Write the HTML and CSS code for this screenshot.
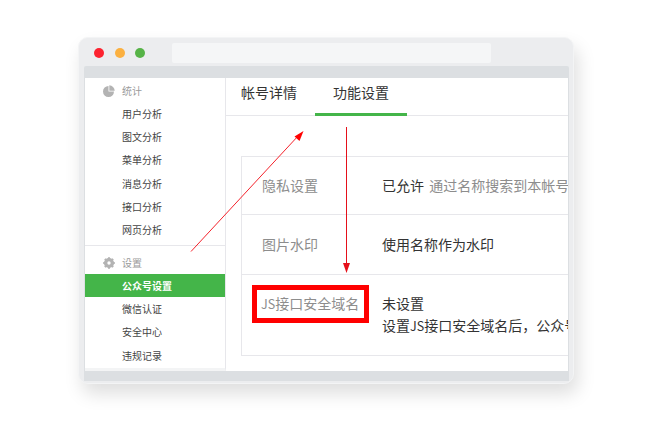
FILE: index.html
```html
<!DOCTYPE html>
<html lang="zh-CN">

<head>
    <meta charset="UTF-8">
    <title>功能设置</title>
    <link rel="stylesheet" href="styles.css">
</head>

<body>
    <div class="window">
        <div class="title_bar">
            <div class="dots">
                <span class="dot red"></span>
                <span class="dot orange"></span>
                <span class="dot green"></span>
            </div>
            <div class="address"></div>
        </div>
        <div class="screen">
            <div class="screen_top"></div>
            <div class="page">
                <div class="side">
                    <div class="menu_title">
                        <svg class="menu_icon" viewBox="0 0 12 12">
                            <path d="M5.500 1V6.500H11A5.500 5.500 0 1 1 5.500 1z" fill="#b3b3b3" />
                            <path d="M6.300 .3A5.500 5.500 0 0 1 11.700 5.700H6.300z" fill="#b3b3b3" />
                        </svg>
                        统计
                    </div>
                    <a class="menu_item">用户分析</a>
                    <a class="menu_item">图文分析</a>
                    <a class="menu_item">菜单分析</a>
                    <a class="menu_item">消息分析</a>
                    <a class="menu_item">接口分析</a>
                    <a class="menu_item">网页分析</a>
                    <div class="menu_line"></div>
                    <div class="menu_title">
                        <svg class="menu_icon" viewBox="0 0 12 12">
                            <circle cx="6" cy="6" r="3.400" fill="none" stroke="#b3b3b3" stroke-width="3.400" />
                            <path d="M6 .2V2M6 10V11.800M.2 6H2M10 6H11.800M1.900 1.900L3.200 3.200M8.800 8.800L10.100 10.100M1.900 10.100L3.200 8.800M8.800 3.200L10.100 1.900" stroke="#b3b3b3" stroke-width="2" />
                        </svg>
                        设置
                    </div>
                    <a class="menu_item active">公众号设置</a>
                    <a class="menu_item">微信认证</a>
                    <a class="menu_item">安全中心</a>
                    <a class="menu_item">违规记录</a>
                </div>
                <div class="main">
                    <div class="tabs">
                        <a class="tab">帐号详情</a>
                        <a class="tab on">功能设置</a>
                    </div>
                    <div class="rows">
                        <div class="row row_one">
                            <div class="row_label">隐私设置</div>
                            <div class="row_text">已允许 <span class="tip">通过名称搜索到本帐号</span></div>
                        </div>
                        <div class="row row_two">
                            <div class="row_label">图片水印</div>
                            <div class="row_text">使用名称作为水印</div>
                        </div>
                        <div class="row row_three">
                            <div class="row_label"><span class="mark"><span class="js">JS</span>接口安全域名</span></div>
                            <div class="row_text">未设置<br>设置<span class="js">JS</span>接口安全域名后，公众号</div>
                        </div>
                    </div>
                </div>
            </div>
            <div class="screen_bottom"></div>
        </div>

        <!-- 红色箭头 -->
        <svg class="arrows" viewBox="0 0 660 430" width="660" height="430">
            <path d="M191 251.500L299 135" stroke="#f4222b" stroke-width="1" fill="none" />
            <path d="M303.500 131L294.500 136.500L299.500 141z" fill="#f00" />
            <path d="M346.500 127V265" stroke="#e5101a" stroke-width="1" fill="none" />
            <path d="M343 263H350L346.500 273z" fill="#e5101a" />
        </svg>
    </div>
</body>

</html>
```

FILE: styles.css
```css
* {
    margin: 0;
    padding: 0;
    box-sizing: border-box;
}

html,
body {
    width: 660px;
    height: 430px;
    overflow: hidden;
    background: #fff;
}

body {
    padding: 37px 86px 0 78px;
    font-family: "Noto Sans CJK SC", "Liberation Sans", sans-serif;
    color: #333;
}

.window {
    width: 496px;
    height: 347px;
    padding: 0 5px 3px 5px;
    background: #ecedef;
    border: 1px solid #f3f4f5;
    border-radius: 10px;
    box-shadow: 4px 10px 18px rgba(0, 0, 0, .13);
}

.title_bar {
    height: 28px;
    display: flex;
    align-items: center;
    padding-top: 1px;
}

.dots {
    width: 88px;
    display: flex;
    gap: 10.500px;
    padding-left: 10px;
}

.dot {
    width: 10px;
    height: 10px;
    border-radius: 50%;
}

.red {
    background: #fc2330;
}

.orange {
    background: #fbb040;
}

.green {
    background: #56b347;
}

.address {
    width: 319px;
    height: 20px;
    background: #f5f6f7;
    border-radius: 2px;
}

.screen {
    width: 485px;
    height: 315px;
    display: flex;
    flex-direction: column;
    background: #dcdfe2;
    overflow: hidden;
    padding-left: 1px;
    border-radius: 2px 2px 0 0;
}

.screen_top {
    height: 12px;
    flex: none;
}

.page {
    width: 483px;
    height: 293px;
    flex: none;
    display: flex;
    background: #fff;
    overflow: hidden;
}

.screen_bottom {
    flex: 1;
}

.side {
    width: 141px;
    flex: none;
    padding-top: 1px;
    border-right: 1px solid #e7e7eb;
    border-bottom: 3px solid #f3f4f5;
    font-size: 10px;
}

.menu_title {
    height: 23px;
    display: flex;
    align-items: center;
    padding-left: 18px;
    color: #9a9a9a;
}

.menu_icon {
    width: 12px;
    height: 12px;
    margin-right: 7px;
}

.menu_item {
    display: block;
    height: 23.200px;
    line-height: 23px;
    padding-left: 37px;
    color: #444;
}

.menu_line {
    height: 1px;
    margin: 4px 0 5px;
    background: #e7e7eb;
}

.menu_item.active {
    height: 23px;
    background: #44b549;
    color: #fff;
    font-weight: bold;
}

.main {
    flex: 1;
    min-width: 0;
    padding-bottom: 16px;
}

.tabs {
    height: 38px;
    display: flex;
    padding-left: 15px;
    border-bottom: 1px solid #e7e7eb;
}

.tab {
    width: 56px;
    line-height: 29px;
    font-size: 14px;
    white-space: nowrap;
}

.tab.on {
    box-sizing: content-box;
    width: 56px;
    height: 35px;
    margin-left: 18px;
    padding: 0 18px;
    border-bottom: 3px solid #44b549;
}

.rows {
    width: 400px;
    margin: 40px 0 0 15px;
    border: 1px solid #e7e7eb;
    border-right: 0;
    font-size: 14px;
}

.row {
    display: flex;
    border-bottom: 1px solid #e7e7eb;
}

.row:last-child {
    border-bottom: 0;
}

.row_one {
    height: 58px;
    align-items: center;
    padding-bottom: 2px;
}

.row_two {
    height: 60px;
    align-items: center;
    padding-bottom: 2px;
}

.row_three {
    height: 80px;
    padding-top: 17px;
}

.row_label {
    width: 140px;
    flex: none;
    padding-left: 20px;
    color: #8d8d8d;
}

.row_three .row_label {
    padding-left: 10px;
    margin-top: -7px;
}

.mark {
    display: block;
    width: 117px;
    height: 38px;
    line-height: 26px;
    border: 5px solid #f00;
    padding-left: 4px;
    white-space: nowrap;
}

.js {
    font-size: 12.500px;
}

.row_text {
    white-space: nowrap;
    line-height: 22px;
}

.tip {
    margin-left: 2px;
    color: #8d8d8d;
}

.arrows {
    position: absolute;
    left: 0;
    top: 0;
    pointer-events: none;
}
```
